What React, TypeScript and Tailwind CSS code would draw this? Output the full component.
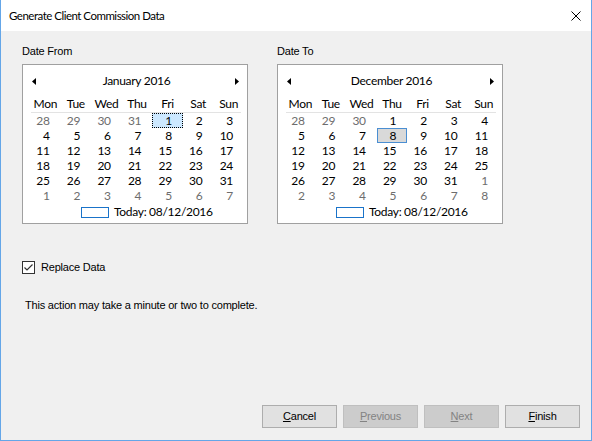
type Cell = { day: number; muted: boolean };

// Builds the 6x7 grid of a Monday-first month view.
function makeMonth(offset: number, days: number, prevDays: number): Cell[] {
  const cells: Cell[] = [];
  for (let i = offset; i > 0; i--) cells.push({ day: prevDays - i + 1, muted: true });
  for (let d = 1; d <= days; d++) cells.push({ day: d, muted: false });
  let n = 1;
  while (cells.length < 42) cells.push({ day: n++, muted: true });
  return cells;
}

const DAY_NAMES = ["Mon", "Tue", "Wed", "Thu", "Fri", "Sat", "Sun"];

type CalendarProps = {
  label: string;
  title: string;
  cells: Cell[];
  selected: number;
  focused: boolean;
};

function Calendar({ label, title, cells, selected, focused }: CalendarProps) {
  return (
    <div className="flex flex-col w-[226px]">
      <div className="h-[13px] leading-[13px] mb-[6px]">{label}</div>
      <div className="h-[160px] border border-[#a0a0a0] bg-white flex flex-col pt-[8px] font-['Lato',sans-serif] text-[12px] tracking-[-0.3px] text-black">
        <div className="flex items-center justify-between h-[16px] pl-[9px] pr-[8px]">
          <svg width="4" height="7" viewBox="0 0 4 7">
            <polygon points="4,0 4,7 0,3.5" fill="#000" />
          </svg>
          <span className="leading-[16px] ml-[2px]">{title}</span>
          <svg width="4" height="7" viewBox="0 0 4 7">
            <polygon points="0,0 0,7 4,3.5" fill="#000" />
          </svg>
        </div>
        <div className="ml-[7px] w-[214px] mt-[7px]">
          <div className="grid grid-cols-7 h-[16px] leading-[16px]">
            {DAY_NAMES.map((d) => (
              <div key={d} className="text-center">
                {d}
              </div>
            ))}
          </div>
          <div className="ml-[1px] w-[210px] h-px bg-[#e3e3e3]" />
          <div className="grid grid-cols-7">
            {cells.map((c, i) => {
              const isSel = i === selected;
              const box = isSel
                ? focused
                  ? "border-dotted border-black bg-[#cce8ff]"
                  : "border-[#4a8ed2] bg-[#d9d9d9]"
                : "border-transparent";
              return (
                <div
                  key={i}
                  className={`h-[15px] leading-[13px] text-right pr-[10px] border ${box} ${
                    c.muted ? "text-[#6d6d6d]" : "text-black"
                  }`}
                >
                  {c.day}
                </div>
              );
            })}
          </div>
        </div>
        <div className="flex items-center h-[16px] mt-[1px] ml-[58px] gap-[5px]">
          <div className="w-[28px] h-[11px] border border-[#1a73c9]" />
          <span className="leading-[16px]">Today: 08/12/2016</span>
        </div>
      </div>
    </div>
  );
}

function WinButton({ label, disabled }: { label: string; disabled?: boolean }) {
  return (
    <button
      className={`w-[75px] h-[23px] border text-[11px] leading-[21px] ${
        disabled
          ? "bg-[#cccccc] border-[#bfbfbf] text-[#838383]"
          : "bg-[#e1e1e1] border-[#adadad] text-black"
      }`}
    >
      <span className="underline underline-offset-1">{label[0]}</span>
      {label.slice(1)}
    </button>
  );
}

export default function App() {
  return (
    <div className="w-[592px] h-[441px] flex flex-col bg-[#f0f0f0] border-x border-b border-[#64a6e8] font-['Liberation_Sans',Arial,sans-serif] text-[11px] tracking-[-0.2px] text-black">
      <div className="h-[31px] shrink-0 bg-white flex items-center justify-between pl-[8px] pr-[10px]">
        <span className="font-['Lato',sans-serif] text-[11.5px] tracking-[-0.5px]">
          Generate Client Commission Data
        </span>
        <svg width="10" height="10" viewBox="0 0 10 10">
          <path d="M0.5 0.5 L9.5 9.5 M9.5 0.5 L0.5 9.5" stroke="#000" strokeWidth="1" fill="none" />
        </svg>
      </div>

      <div className="flex-1 flex flex-col pl-[21px] pr-[11px] pb-[12px]">
        <div className="flex gap-[29px] mt-[14px]">
          <Calendar
            label="Date From"
            title="January 2016"
            cells={makeMonth(4, 31, 31)}
            selected={4}
            focused
          />
          <Calendar
            label="Date To"
            title="December 2016"
            cells={makeMonth(3, 31, 30)}
            selected={10}
            focused={false}
          />
        </div>

        <div className="flex items-center gap-[6px] mt-[37px] h-[13px]">
          <div className="w-[13px] h-[13px] border border-[#333333] bg-white flex items-center justify-center">
            <svg width="11" height="11" viewBox="0 0 11 11">
              <path d="M1.5 5.5 L4 8 L9.5 2.5" stroke="#333" strokeWidth="1.2" fill="none" />
            </svg>
          </div>
          <span className="leading-[13px]">Replace Data</span>
        </div>

        <div className="mt-[25px] ml-[3px] leading-[13px]">
          This action may take a minute or two to complete.
        </div>

        <div className="mt-auto flex justify-end gap-[6px]">
          <WinButton label="Cancel" />
          <WinButton label="Previous" disabled />
          <WinButton label="Next" disabled />
          <WinButton label="Finish" />
        </div>
      </div>
    </div>
  );
}
